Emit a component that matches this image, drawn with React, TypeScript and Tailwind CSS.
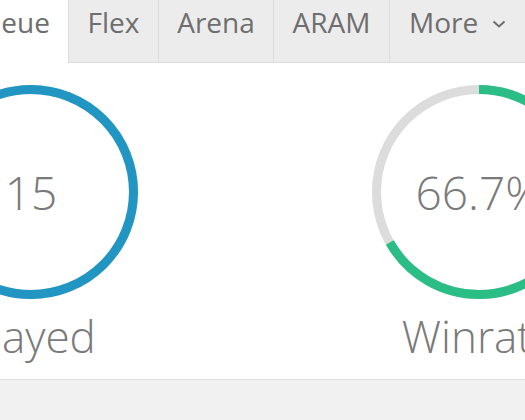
import React from "react";

type Gauge = {
  value: string;
  label: string;
  color: string;
  fraction: number;
};

const gauges: Gauge[] = [
  { value: "15", label: "Played", color: "#2196c3", fraction: 1 },
  { value: "66.7%", label: "Winrate", color: "#2bbd86", fraction: 0.667 },
];

const tabs = [
  { name: "Flex", w: "w-[90px]" },
  { name: "Arena", w: "w-[115px]" },
  { name: "ARAM", w: "w-[116px]" },
];

function Ring({ color, fraction }: { color: string; fraction: number }) {
  const r = 102.5;
  const c = 2 * Math.PI * r;
  return (
    <svg width="214" height="214" viewBox="0 0 214 214">
      <circle cx="107" cy="107" r={r} fill="none" stroke="#dcdcdc" strokeWidth="9" />
      <circle
        cx="107"
        cy="107"
        r={r}
        fill="none"
        stroke={color}
        strokeWidth="9"
        strokeDasharray={`${c * fraction} ${c}`}
        transform="rotate(-90 107 107)"
      />
    </svg>
  );
}

export default function App() {
  return (
    <div
      className="w-[525px] h-[420px] overflow-hidden bg-white flex flex-col"
      style={{ fontFamily: '"Open Sans", "Liberation Sans", sans-serif' }}
    >
      {/* queue tabs */}
      <div className="flex h-[63px] shrink-0 text-[28px] leading-[38px] text-[#6e6e6e]">
        <div className="w-[200px] -ml-[132px] shrink-0 flex justify-end pr-[18px] pt-[3px] bg-white">
          Queue
        </div>
        {tabs.map((t) => (
          <div
            key={t.name}
            className={`${t.w} shrink-0 flex justify-center pt-[3px] bg-[#ececec] border-l border-b border-[#dcdcdc]`}
          >
            {t.name}
          </div>
        ))}
        <div className="flex-1 flex items-start gap-[14px] pl-[19px] pt-[3px] bg-[#ececec] border-l border-b border-[#dcdcdc] whitespace-nowrap">
          More
          <svg width="14" height="8" viewBox="0 0 14 8" className="mt-[17px] shrink-0">
            <path d="M1.5 1.5 L7 6.5 L12.5 1.5" fill="none" stroke="#6e6e6e" strokeWidth="2" />
          </svg>
        </div>
      </div>

      {/* stat gauges */}
      <div className="h-[316px] shrink-0 pt-[22px]">
        <div className="flex gap-[234px] -ml-[76px]">
          {gauges.map((g) => (
            <div key={g.label} className="w-[214px] shrink-0 flex flex-col items-center">
              <div className="relative w-[214px] h-[214px]">
                <Ring color={g.color} fraction={g.fraction} />
                <div className="absolute inset-0 flex items-center justify-center text-[46px] leading-[46px] font-light text-[#7a7a7a] whitespace-nowrap">
                  {g.value}
                </div>
              </div>
              <div className="mt-[15px] text-[44px] leading-[44px] font-light text-[#7a7a7a] whitespace-nowrap">
                {g.label}
              </div>
            </div>
          ))}
        </div>
      </div>

      <div className="flex-1 bg-[#f1f1f1] border-t border-[#dedede]" />
    </div>
  );
}
